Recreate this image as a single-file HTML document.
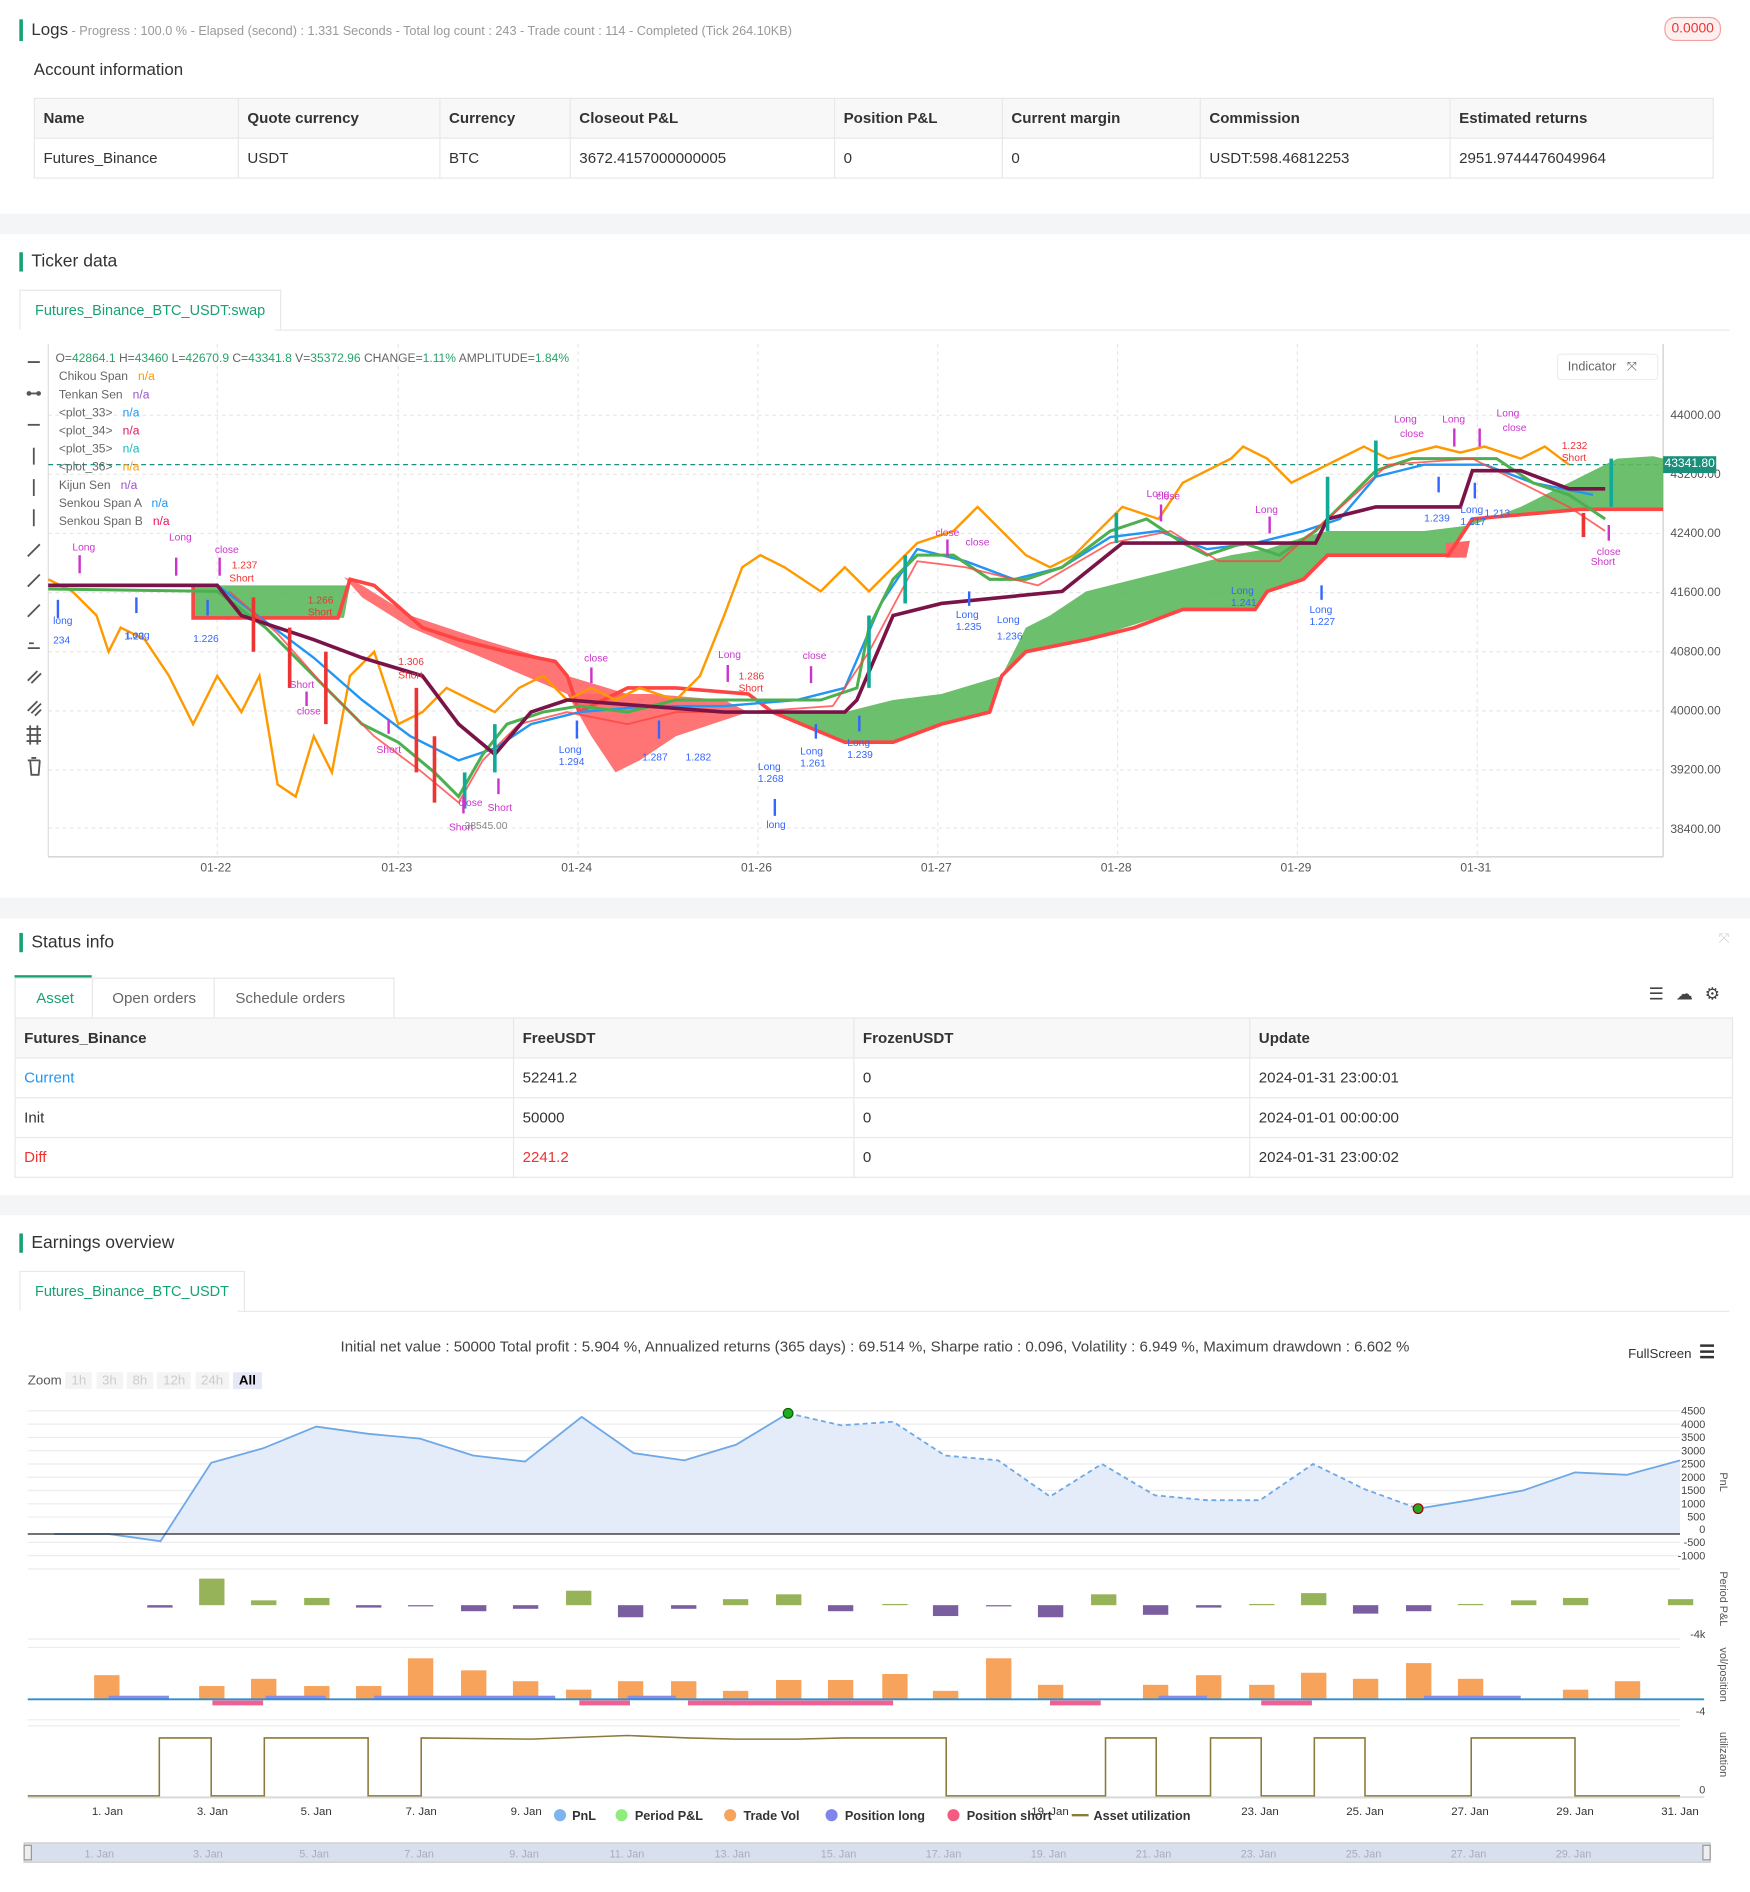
<!DOCTYPE html>
<html><head><meta charset="utf-8">
<style>
html,body{margin:0;padding:0;background:#fff;overflow:hidden}
body{width:1750px;height:1892px}
#w{width:1450px;height:1568px;transform:scale(1.2069);transform-origin:0 0;position:relative;font-family:"Liberation Sans",sans-serif;color:#333;font-size:13px}
.a{position:absolute;white-space:nowrap}
.band{position:absolute;left:0;width:1450px;background:#f4f5f7}
.ttl{position:absolute;left:16px;font-size:14.5px;color:#333;border-left:3px solid #18a274;padding-left:7px;line-height:16px;white-space:nowrap}
table{border-collapse:collapse;position:absolute;font-size:12.5px}
td{border:1px solid #e8e8e8;padding:0 7px;height:32px}
tr.h td{background:#f8f8f8;font-weight:bold;color:#333}
.tab{position:absolute;border:1px solid #e8e8e8;border-bottom:none;background:#fff;color:#18a274;font-size:12px;padding:0 12px;line-height:32px}
.tl{position:absolute;left:24px;width:10px;height:2px;background:#555}
</style></head><body><div id="w">

<div class="ttl" style="top:16px;font-size:14px">Logs<span style="font-size:10.5px;color:#999"> - Progress : 100.0 % - Elapsed (second) : 1.331 Seconds - Total log count : 243 - Trade count : 114 - Completed (Tick 264.10KB)</span></div>
<div class="a" style="left:1379px;top:14px;width:45px;height:18px;border:1px solid #f5a0a0;border-radius:9px;background:#fff0f0;color:#e33;font-size:11.5px;text-align:center;line-height:18px">0.0000</div>
<div class="a" style="left:28px;top:49px;font-size:14px">Account information</div>
<table style="left:28px;top:81px;width:1392px">
<tr class="h"><td style="width:154px">Name</td><td style="width:152px">Quote currency</td><td style="width:93px">Currency</td><td style="width:204px">Closeout P&amp;L</td><td style="width:124px">Position P&amp;L</td><td style="width:149px">Current margin</td><td style="width:192px">Commission</td><td>Estimated returns</td></tr>
<tr><td>Futures_Binance</td><td>USDT</td><td>BTC</td><td>3672.4157000000005</td><td>0</td><td>0</td><td>USDT:598.46812253</td><td>2951.9744476049964</td></tr>
</table>
<div class="band" style="top:177px;height:17px"></div>

<div class="ttl" style="top:209px">Ticker data</div>
<div class="tab" style="left:16px;top:240px">Futures_Binance_BTC_USDT:swap</div>
<div class="a" style="left:228px;top:273px;width:1205px;height:1px;background:#e8e8e8"></div>

<svg class="a" style="left:0;top:280px" width="1450" height="450" viewBox="0 280 1450 450">
<g stroke="#e6e6e6" stroke-dasharray="3,3">
<line x1="40" y1="344" x2="1378" y2="344"/><line x1="40" y1="393" x2="1378" y2="393"/><line x1="40" y1="442" x2="1378" y2="442"/><line x1="40" y1="491" x2="1378" y2="491"/><line x1="40" y1="540" x2="1378" y2="540"/><line x1="40" y1="589" x2="1378" y2="589"/><line x1="40" y1="638" x2="1378" y2="638"/><line x1="40" y1="686" x2="1378" y2="686"/>
<line x1="180" y1="285" x2="180" y2="710"/><line x1="330" y1="285" x2="330" y2="710"/><line x1="479" y1="285" x2="479" y2="710"/><line x1="628" y1="285" x2="628" y2="710"/><line x1="777" y1="285" x2="777" y2="710"/><line x1="926" y1="285" x2="926" y2="710"/><line x1="1075" y1="285" x2="1075" y2="710"/><line x1="1224" y1="285" x2="1224" y2="710"/>
</g>
<line x1="40" y1="285" x2="40" y2="710" stroke="#ddd"/><line x1="40" y1="710" x2="1378" y2="710" stroke="#ccc"/><line x1="1378" y1="285" x2="1378" y2="710" stroke="#ccc"/>
<line x1="40" y1="385" x2="1378" y2="385" stroke="#1a8f7a" stroke-dasharray="4,3"/>
<polygon fill="#5cb85c" opacity=".9" points="160,485 290,485 285,512 160,512"/>
<polygon fill="#f66" opacity=".9" points="285,478 300,485 340,510 400,530 460,548 470,560 520,575 480,590 470,575 400,545 340,520 300,495"/>
<polygon fill="#f66" opacity=".9" points="470,575 540,575 600,580 620,590 590,600 560,610 530,630 510,640 490,610"/>
<polygon fill="#5cb85c" opacity=".9" points="620,590 700,590 740,580 780,575 830,560 850,520 870,510 900,490 940,480 980,470 1020,460 1050,455 1080,445 1100,440 1180,440 1220,435 1260,420 1300,400 1340,380 1370,378 1378,380 1378,422 1310,422 1220,430 1200,460 1100,460 1080,480 1050,490 1040,505 980,505 900,530 850,540 830,560 820,590 780,600 740,615 700,615 640,590"/>
<polygon fill="#f66" points="1198,450 1218,448 1215,462 1198,462"/>
<polyline fill="none" stroke="#f44" stroke-width="3" points="40,485 160,485 160,512 280,512 290,480 310,485 350,520 380,530 420,540 460,548 470,560 480,590 520,570 560,570 620,575 640,590 700,615 740,615 780,600 820,590 830,560 850,540 900,530 940,520 980,505 1040,505 1050,490 1080,480 1100,460 1200,460 1220,430 1310,422 1378,422"/>
<polyline fill="none" stroke="#f90" stroke-width="2" points="40,480 60,490 80,510 90,540 100,520 120,530 140,560 160,600 170,580 180,560 200,590 215,560 230,650 245,660 260,610 275,640 290,560 310,540 330,600 350,590 370,570 390,580 410,590 430,570 450,560 470,580 490,570 510,580 530,570 560,580 580,560 600,510 615,470 630,460 650,470 680,490 700,470 720,490 740,470 760,450 790,440 810,420 830,440 850,460 870,470 890,460 910,440 930,420 960,430 980,400 1000,390 1020,380 1030,370 1050,380 1070,400 1090,390 1110,380 1130,370 1150,380 1170,375 1190,370 1210,375 1230,370 1260,380 1280,370 1300,385"/>
<polyline fill="none" stroke="#2196f3" stroke-width="2" points="40,485 180,485 220,515 260,545 300,580 340,610 380,630 410,620 440,600 480,590 540,585 600,585 660,580 700,570 730,500 760,455 800,465 840,480 880,470 920,445 960,440 1000,455 1040,450 1080,440 1110,430 1140,395 1180,385 1230,385 1270,400 1320,410"/>
<polyline fill="none" stroke="#4caf50" stroke-width="2.5" points="40,488 180,490 220,520 260,560 300,600 330,615 360,640 380,660 400,625 420,600 450,590 480,585 520,590 560,580 600,580 640,580 680,580 710,570 720,520 740,480 760,460 790,460 820,480 850,480 880,470 920,440 950,430 980,450 1000,460 1030,450 1060,460 1090,440 1110,420 1140,390 1170,380 1210,380 1240,380 1270,400 1300,410 1330,430"/>
<polyline fill="none" stroke="#f44" stroke-width="1.5" opacity=".8" points="190,490 230,525 270,570 310,610 350,640 380,665 400,630 430,600 470,590 520,600 560,590 620,590 690,585 720,540 760,465 800,470 860,485 920,450 970,440 1010,465 1060,465 1100,430 1150,385 1220,380 1260,400 1300,420 1330,440"/>
<polyline fill="none" stroke="#7a1448" stroke-width="3" points="40,485 180,485 200,510 260,530 300,545 350,560 380,600 410,625 440,590 470,580 600,590 700,590 710,580 740,510 780,500 880,490 930,450 1030,450 1090,450 1100,430 1140,420 1210,420 1220,390 1260,390 1300,405 1330,405"/>
<g stroke-width="3">
<line x1="210" y1="495" x2="210" y2="540" stroke="#e33"/><line x1="240" y1="520" x2="240" y2="570" stroke="#e33"/><line x1="270" y1="540" x2="270" y2="600" stroke="#e33"/><line x1="345" y1="570" x2="345" y2="640" stroke="#e33"/><line x1="360" y1="610" x2="360" y2="665" stroke="#e33"/><line x1="385" y1="640" x2="385" y2="670" stroke="#1a9"/><line x1="410" y1="600" x2="410" y2="640" stroke="#1a9"/><line x1="720" y1="510" x2="720" y2="570" stroke="#1a9"/><line x1="750" y1="460" x2="750" y2="500" stroke="#1a9"/><line x1="925" y1="425" x2="925" y2="450" stroke="#1a9"/><line x1="1100" y1="395" x2="1100" y2="440" stroke="#1a9"/><line x1="1140" y1="365" x2="1140" y2="395" stroke="#1a9"/><line x1="1312" y1="425" x2="1312" y2="445" stroke="#e33"/><line x1="1335" y1="380" x2="1335" y2="420" stroke="#1a9"/>
</g>
<g font-size="8.5" font-family="Liberation Sans">
<text x="60" y="456" fill="#c3c">Long</text><text x="140" y="448" fill="#c3c">Long</text><text x="178" y="458" fill="#c3c">close</text><text x="192" y="471" fill="#e33">1.237</text><text x="190" y="482" fill="#e33">Short</text><text x="255" y="500" fill="#e33">1.266</text><text x="255" y="510" fill="#e33">Short</text><text x="330" y="551" fill="#e33">1.306</text><text x="330" y="562" fill="#e33">Short</text><text x="44" y="517" fill="#36f">long</text><text x="44" y="533" fill="#36f">234</text><text x="105" y="529" fill="#36f">Long</text><text x="103" y="530" fill="#36f">1.23</text><text x="160" y="532" fill="#36f">1.226</text><text x="240" y="570" fill="#c3c">Short</text><text x="246" y="592" fill="#c3c">close</text><text x="312" y="624" fill="#c3c">Short</text><text x="380" y="668" fill="#c3c">close</text><text x="404" y="672" fill="#c3c">Short</text><text x="372" y="688" fill="#c3c">Short</text><text x="385" y="687" fill="#888">38545.00</text>
<text x="463" y="624" fill="#36f">Long</text><text x="463" y="634" fill="#36f">1.294</text><text x="532" y="630" fill="#36f">1.287</text><text x="568" y="630" fill="#36f">1.282</text><text x="628" y="638" fill="#36f">Long</text><text x="628" y="648" fill="#36f">1.268</text><text x="663" y="625" fill="#36f">Long</text><text x="663" y="635" fill="#36f">1.261</text><text x="702" y="618" fill="#36f">Long</text><text x="702" y="628" fill="#36f">1.239</text><text x="635" y="686" fill="#36f">long</text><text x="484" y="548" fill="#c3c">close</text><text x="595" y="545" fill="#c3c">Long</text><text x="612" y="563" fill="#e33">1.286</text><text x="612" y="573" fill="#e33">Short</text><text x="665" y="546" fill="#c3c">close</text>
<text x="792" y="512" fill="#36f">Long</text><text x="792" y="522" fill="#36f">1.235</text><text x="826" y="516" fill="#36f">Long</text><text x="826" y="530" fill="#36f">1.236</text><text x="775" y="444" fill="#c3c">close</text><text x="800" y="452" fill="#c3c">close</text><text x="950" y="412" fill="#c3c">Long</text><text x="958" y="414" fill="#c3c">close</text><text x="1040" y="425" fill="#c3c">Long</text><text x="1020" y="492" fill="#36f">Long</text><text x="1020" y="502" fill="#36f">1.241</text><text x="1085" y="508" fill="#36f">Long</text><text x="1085" y="518" fill="#36f">1.227</text><text x="1155" y="350" fill="#c3c">Long</text><text x="1160" y="362" fill="#c3c">close</text><text x="1195" y="350" fill="#c3c">Long</text><text x="1240" y="345" fill="#c3c">Long</text><text x="1245" y="357" fill="#c3c">close</text><text x="1294" y="372" fill="#e33">1.232</text><text x="1294" y="382" fill="#e33">Short</text><text x="1180" y="432" fill="#36f">1.239</text><text x="1210" y="425" fill="#36f">Long</text><text x="1210" y="435" fill="#36f">1.217</text><text x="1230" y="428" fill="#36f">1.213</text><text x="1323" y="460" fill="#c3c">close</text><text x="1318" y="468" fill="#c3c">Short</text>
</g>
<g stroke="#36f" stroke-width="2"><line x1="48" y1="497" x2="48" y2="512"/><line x1="113" y1="495" x2="113" y2="508"/><line x1="172" y1="497" x2="172" y2="510"/><line x1="478" y1="597" x2="478" y2="612"/><line x1="546" y1="597" x2="546" y2="612"/><line x1="642" y1="662" x2="642" y2="676"/><line x1="676" y1="600" x2="676" y2="612"/><line x1="712" y1="593" x2="712" y2="606"/><line x1="803" y1="490" x2="803" y2="502"/><line x1="1095" y1="485" x2="1095" y2="497"/><line x1="1192" y1="395" x2="1192" y2="408"/><line x1="1222" y1="400" x2="1222" y2="413"/></g>
<g stroke="#c3c" stroke-width="2"><line x1="66" y1="460" x2="66" y2="475"/><line x1="146" y1="462" x2="146" y2="477"/><line x1="182" y1="462" x2="182" y2="477"/><line x1="254" y1="573" x2="254" y2="585"/><line x1="322" y1="596" x2="322" y2="608"/><line x1="384" y1="660" x2="384" y2="674"/><line x1="413" y1="645" x2="413" y2="658"/><line x1="490" y1="553" x2="490" y2="566"/><line x1="603" y1="551" x2="603" y2="565"/><line x1="672" y1="552" x2="672" y2="566"/><line x1="785" y1="447" x2="785" y2="461"/><line x1="962" y1="418" x2="962" y2="432"/><line x1="1052" y1="428" x2="1052" y2="442"/><line x1="1205" y1="355" x2="1205" y2="370"/><line x1="1226" y1="355" x2="1226" y2="370"/><line x1="1333" y1="435" x2="1333" y2="448"/></g>
<g stroke="#555" stroke-width="1.5" fill="none">
<path d="M23 300h10M26 300h4"/><path d="M23 326h10"/><circle cx="24" cy="326" r="1.2"/><circle cx="32" cy="326" r="1.2"/><path d="M23 352h10"/>
<path d="M28 371v14M28 397v14M28 422v14"/>
<path d="M23 461l10-10M23 486l10-10M23 511l10-10"/>
<path d="M23 537h10M24 533h4"/><path d="M23 564l8-8M26 566l8-8M23 589l8-8M26 591l8-8M29 593l5-5"/>
<path d="M22 604h12M22 609h12M22 614h12M25 601v16M31 601v16"/>
<path d="M23 630h10M25 630l1 12h6l1-12M26 628h4"/>
</g>
</svg>
<div class="a" style="left:46px;top:290px;font-size:10px;color:#666;line-height:15px">O=<span style="color:#26a269">42864.1</span> H=<span style="color:#26a269">43460</span> L=<span style="color:#26a269">42670.9</span> C=<span style="color:#26a269">43341.8</span> V=<span style="color:#26a269">35372.96</span> CHANGE=<span style="color:#26a269">1.11%</span> AMPLITUDE=<span style="color:#26a269">1.84%</span><br>
&nbsp;Chikou Span &nbsp; <span style="color:#f90">n/a</span><br>&nbsp;Tenkan Sen &nbsp; <span style="color:#95c">n/a</span><br>&nbsp;&lt;plot_33&gt; &nbsp; <span style="color:#2196f3">n/a</span><br>&nbsp;&lt;plot_34&gt; &nbsp; <span style="color:#e2185b">n/a</span><br>&nbsp;&lt;plot_35&gt; &nbsp; <span style="color:#1bb">n/a</span><br>&nbsp;&lt;plot_36&gt; &nbsp; <span style="color:#f90">n/a</span><br>&nbsp;Kijun Sen &nbsp; <span style="color:#95c">n/a</span><br>&nbsp;Senkou Span A &nbsp; <span style="color:#2196f3">n/a</span><br>&nbsp;Senkou Span B &nbsp; <span style="color:#e2185b">n/a</span></div>
<div class="a" style="left:1290px;top:293px;width:74px;height:20px;border:1px solid #eee;border-radius:3px;font-size:10.5px;color:#666;line-height:20px;padding-left:8px">Indicator &nbsp; ⤧</div>
<div class="a" style="left:1384px;top:320px;font-size:10px;color:#555;line-height:49px">44000.00<br>43200.00<br>42400.00<br>41600.00<br>40800.00<br>40000.00<br>39200.00<br>38400.00</div>
<div class="a" style="left:1378px;top:378px;width:44px;height:14px;background:#1a8f7a;color:#fff;font-size:10px;line-height:14px;text-align:center">43341.80</div>
<div class="a" style="left:0;top:714px;font-size:10px;color:#555">
<span class="a" style="left:166px">01-22</span><span class="a" style="left:316px">01-23</span><span class="a" style="left:465px">01-24</span><span class="a" style="left:614px">01-26</span><span class="a" style="left:763px">01-27</span><span class="a" style="left:912px">01-28</span><span class="a" style="left:1061px">01-29</span><span class="a" style="left:1210px">01-31</span></div>
<div class="band" style="top:744px;height:17px"></div>

<div class="ttl" style="top:773px">Status info</div>
<div class="a" style="left:1424px;top:772px;color:#ccc;font-size:11px">⤧</div>
<div class="a" style="left:12px;top:808px;width:64px;height:2px;background:#18a274"></div>
<div class="a" style="left:12px;top:810px;width:313px;height:33px;border:1px solid #e8e8e8;border-bottom:none;font-size:12.5px;line-height:33px;color:#666"><span style="position:absolute;left:17px;color:#18a274">Asset</span><span style="position:absolute;left:80px">Open orders</span><span style="position:absolute;left:164px;top:0;height:33px;border-left:1px solid #e8e8e8;padding-left:17px">Schedule orders</span><span style="position:absolute;left:63px;top:-2px;height:35px;border-left:1px solid #e8e8e8"></span></div>
<div class="a" style="left:1366px;top:815px;font-size:14px;color:#444;letter-spacing:10px">☰☁⚙</div>
<table style="left:12px;top:843px;width:1424px">
<tr class="h"><td style="width:398px">Futures_Binance</td><td style="width:267px">FreeUSDT</td><td style="width:313px">FrozenUSDT</td><td>Update</td></tr>
<tr><td style="color:#2196f3">Current</td><td>52241.2</td><td>0</td><td>2024-01-31 23:00:01</td></tr>
<tr><td>Init</td><td>50000</td><td>0</td><td>2024-01-01 00:00:00</td></tr>
<tr><td style="color:#e33">Diff</td><td style="color:#e33">2241.2</td><td>0</td><td>2024-01-31 23:00:02</td></tr>
</table>
<div class="band" style="top:990px;height:17px"></div>

<div class="ttl" style="top:1022px">Earnings overview</div>
<div class="tab" style="left:16px;top:1053px">Futures_Binance_BTC_USDT</div>
<div class="a" style="left:197px;top:1086px;width:1236px;height:1px;background:#e8e8e8"></div>
<div class="a" style="left:0;width:1450px;top:1109px;text-align:center;font-size:12.5px;color:#444">Initial net value : 50000 Total profit : 5.904 %, Annualized returns (365 days) : 69.514 %, Sharpe ratio : 0.096, Volatility : 6.949 %, Maximum drawdown : 6.602 %</div>
<div class="a" style="left:1349px;top:1111px;font-size:11px;color:#333">FullScreen &nbsp;<b style="font-size:15px">☰</b></div>
<div class="a" style="left:23px;top:1135px;font-size:11px;color:#555;line-height:18px">Zoom <span style="background:#f4f4f4;color:#ccc;padding:1px 5px">1h</span> <span style="background:#f4f4f4;color:#ccc;padding:1px 5px">3h</span> <span style="background:#f4f4f4;color:#ccc;padding:1px 5px">8h</span> <span style="background:#f4f4f4;color:#ccc;padding:1px 5px">12h</span> <span style="background:#f4f4f4;color:#ccc;padding:1px 5px">24h</span> <span style="background:#e6e9f5;color:#000;font-weight:bold;padding:1px 5px">All</span></div>

<svg class="a" style="left:0;top:1160px" width="1450" height="408" viewBox="0 1160 1450 408">
<g stroke="#ececec"><line x1="23" y1="1169" x2="1392" y2="1169"/><line x1="23" y1="1180" x2="1392" y2="1180"/><line x1="23" y1="1191" x2="1392" y2="1191"/><line x1="23" y1="1202" x2="1392" y2="1202"/><line x1="23" y1="1213" x2="1392" y2="1213"/><line x1="23" y1="1224" x2="1392" y2="1224"/><line x1="23" y1="1235" x2="1392" y2="1235"/><line x1="23" y1="1246" x2="1392" y2="1246"/><line x1="23" y1="1257" x2="1392" y2="1257"/><line x1="23" y1="1278" x2="1392" y2="1278"/><line x1="23" y1="1289" x2="1392" y2="1289"/>
<line x1="23" y1="1300" x2="1392" y2="1300"/><line x1="23" y1="1358" x2="1392" y2="1358"/><line x1="23" y1="1365" x2="1392" y2="1365"/><line x1="23" y1="1425" x2="1392" y2="1425"/><line x1="23" y1="1430" x2="1392" y2="1430"/><line x1="23" y1="1490" x2="1392" y2="1490"/></g>
<polygon fill="#e3ecf8" points="45,1271 90,1271 133,1277 175,1212 218,1200 262,1182 305,1188 348,1192 392,1206 435,1211 482,1174 525,1204 567,1210 610,1197 653,1171 697,1181 740,1178 783,1206 827,1210 870,1240 913,1213 957,1239 1000,1243 1044,1243 1088,1213 1131,1234 1175,1250 1218,1243 1262,1235 1305,1220 1348,1222 1392,1210 1392,1271"/>
<polyline fill="none" stroke="#6fa8e6" stroke-width="1.5" points="45,1271 90,1271 133,1277 175,1212 218,1200 262,1182 305,1188 348,1192 392,1206 435,1211 482,1174 525,1204 567,1210 610,1197 653,1171"/>
<polyline fill="none" stroke="#6fa8e6" stroke-width="1.5" stroke-dasharray="4,3" points="653,1171 697,1181 740,1178 783,1206 827,1210 870,1240 913,1213 957,1239 1000,1243 1044,1243 1088,1213 1131,1234 1175,1250"/>
<polyline fill="none" stroke="#6fa8e6" stroke-width="1.5" points="1175,1250 1218,1243 1262,1235 1305,1220 1348,1222 1392,1210"/>
<line x1="23" y1="1271" x2="1392" y2="1271" stroke="#222"/>
<circle cx="653" cy="1171" r="4" fill="#2a2" stroke="#060"/><circle cx="1175" cy="1250" r="4" fill="#2a2" stroke="#a00"/>
<g fill="#97b35a"><rect x="165" y="1308" width="21" height="22"/><rect x="208" y="1326" width="21" height="4"/><rect x="252" y="1324" width="21" height="6"/><rect x="469" y="1318" width="21" height="12"/><rect x="599" y="1325" width="21" height="5"/><rect x="643" y="1321" width="21" height="9"/><rect x="904" y="1321" width="21" height="9"/><rect x="1078" y="1320" width="21" height="10"/><rect x="1252" y="1326" width="21" height="4"/><rect x="1295" y="1324" width="21" height="6"/><rect x="1382" y="1325" width="21" height="5"/><rect x="731" y="1329" width="21" height="1"/><rect x="1035" y="1329" width="21" height="1"/><rect x="1208" y="1329" width="21" height="1"/></g>
<g fill="#7b5ea0"><rect x="122" y="1330" width="21" height="2"/><rect x="295" y="1330" width="21" height="2"/><rect x="338" y="1330" width="21" height="1"/><rect x="382" y="1330" width="21" height="5"/><rect x="425" y="1330" width="21" height="3"/><rect x="512" y="1330" width="21" height="10"/><rect x="556" y="1330" width="21" height="3"/><rect x="686" y="1330" width="21" height="5"/><rect x="773" y="1330" width="21" height="9"/><rect x="817" y="1330" width="21" height="1"/><rect x="860" y="1330" width="21" height="10"/><rect x="947" y="1330" width="21" height="8"/><rect x="991" y="1330" width="21" height="2"/><rect x="1121" y="1330" width="21" height="7"/><rect x="1165" y="1330" width="21" height="5"/></g>
<g fill="#f7a35c"><rect x="78" y="1388" width="21" height="20"/><rect x="165" y="1397" width="21" height="11"/><rect x="208" y="1391" width="21" height="17"/><rect x="252" y="1397" width="21" height="11"/><rect x="295" y="1397" width="21" height="11"/><rect x="338" y="1374" width="21" height="34"/><rect x="382" y="1384" width="21" height="24"/><rect x="425" y="1393" width="21" height="15"/><rect x="469" y="1400" width="21" height="8"/><rect x="512" y="1393" width="21" height="15"/><rect x="556" y="1393" width="21" height="15"/><rect x="599" y="1401" width="21" height="7"/><rect x="643" y="1392" width="21" height="16"/><rect x="686" y="1392" width="21" height="16"/><rect x="731" y="1387" width="21" height="21"/><rect x="773" y="1401" width="21" height="7"/><rect x="817" y="1374" width="21" height="34"/><rect x="860" y="1396" width="21" height="12"/><rect x="947" y="1396" width="21" height="12"/><rect x="991" y="1388" width="21" height="20"/><rect x="1035" y="1396" width="21" height="12"/><rect x="1078" y="1386" width="21" height="22"/><rect x="1121" y="1391" width="21" height="17"/><rect x="1165" y="1378" width="21" height="30"/><rect x="1208" y="1391" width="21" height="17"/><rect x="1295" y="1400" width="21" height="8"/><rect x="1338" y="1393" width="21" height="15"/></g>
<g fill="#8c8ce8"><rect x="90" y="1405" width="50" height="3"/><rect x="220" y="1405" width="50" height="3"/><rect x="310" y="1405" width="150" height="3"/><rect x="520" y="1405" width="40" height="3"/><rect x="960" y="1405" width="40" height="3"/><rect x="1180" y="1405" width="80" height="3"/></g>
<g fill="#f06090"><rect x="176" y="1409" width="42" height="4"/><rect x="480" y="1409" width="42" height="4"/><rect x="570" y="1409" width="170" height="4"/><rect x="870" y="1409" width="42" height="4"/><rect x="1045" y="1409" width="42" height="4"/></g>
<line x1="23" y1="1408" x2="1412" y2="1408" stroke="#2a8fd0" stroke-width="1.5"/>
<polyline fill="none" stroke="#8b7a3a" stroke-width="1.3" points="23,1488 132,1488 132,1440 175,1440 175,1488 219,1488 219,1440 305,1440 305,1488 349,1488 349,1440 440,1441 520,1438 570,1440 610,1441 660,1441 700,1440 784,1440 784,1488 916,1488 916,1440 958,1440 958,1488 1003,1488 1003,1440 1045,1440 1045,1488 1089,1488 1089,1440 1131,1440 1131,1488 1219,1488 1219,1440 1305,1440 1305,1488 1392,1488"/>
<line x1="23" y1="1489" x2="1412" y2="1489" stroke="#ccc"/>
<g font-size="9" fill="#444" font-family="Liberation Sans" text-anchor="end"><text x="1413" y="1172">4500</text><text x="1413" y="1183">4000</text><text x="1413" y="1194">3500</text><text x="1413" y="1205">3000</text><text x="1413" y="1216">2500</text><text x="1413" y="1227">2000</text><text x="1413" y="1238">1500</text><text x="1413" y="1249">1000</text><text x="1413" y="1260">500</text><text x="1413" y="1270">0</text><text x="1413" y="1281">-500</text><text x="1413" y="1292">-1000</text><text x="1413" y="1357">-4k</text><text x="1413" y="1421">-4</text><text x="1413" y="1486">0</text></g>
<g font-size="9" fill="#555" font-family="Liberation Sans" transform="rotate(90)"><text x="1220" y="-1425">PnL</text><text x="1302" y="-1425">Period P&amp;L</text><text x="1365" y="-1425">vol/position</text><text x="1435" y="-1425">utilization</text></g>
<g font-size="9.5" fill="#333" font-family="Liberation Sans" text-anchor="middle"><text x="89" y="1504">1. Jan</text><text x="176" y="1504">3. Jan</text><text x="262" y="1504">5. Jan</text><text x="349" y="1504">7. Jan</text><text x="436" y="1504">9. Jan</text><text x="870" y="1504">19. Jan</text><text x="1044" y="1504">23. Jan</text><text x="1131" y="1504">25. Jan</text><text x="1218" y="1504">27. Jan</text><text x="1305" y="1504">29. Jan</text><text x="1392" y="1504">31. Jan</text></g>
<g font-size="10.5" font-weight="bold" fill="#333" font-family="Liberation Sans"><circle cx="464" cy="1504" r="5" fill="#7cb5ec"/><text x="474" y="1508">PnL</text><circle cx="515" cy="1504" r="5" fill="#90ed7d"/><text x="526" y="1508">Period P&amp;L</text><circle cx="605" cy="1504" r="5" fill="#f7a35c"/><text x="616" y="1508">Trade Vol</text><circle cx="689" cy="1504" r="5" fill="#8085e9"/><text x="700" y="1508">Position long</text><circle cx="790" cy="1504" r="5" fill="#f15c80"/><text x="801" y="1508">Position short</text><line x1="888" y1="1504" x2="902" y2="1504" stroke="#8b7a3a" stroke-width="2"/><text x="906" y="1508">Asset utilization</text></g>
<rect x="20" y="1527" width="1397" height="16" fill="#d8e0ee" stroke="#ccc"/>
<g font-size="9" fill="#aab" font-family="Liberation Sans"><text x="70" y="1539">1. Jan</text><text x="160" y="1539">3. Jan</text><text x="248" y="1539">5. Jan</text><text x="335" y="1539">7. Jan</text><text x="422" y="1539">9. Jan</text><text x="505" y="1539">11. Jan</text><text x="592" y="1539">13. Jan</text><text x="680" y="1539">15. Jan</text><text x="767" y="1539">17. Jan</text><text x="854" y="1539">19. Jan</text><text x="941" y="1539">21. Jan</text><text x="1028" y="1539">23. Jan</text><text x="1115" y="1539">25. Jan</text><text x="1202" y="1539">27. Jan</text><text x="1289" y="1539">29. Jan</text></g>
<rect x="20" y="1529" width="6" height="12" fill="#eee" stroke="#999"/><rect x="1411" y="1529" width="6" height="12" fill="#eee" stroke="#999"/>
</svg>
</div></body></html>
